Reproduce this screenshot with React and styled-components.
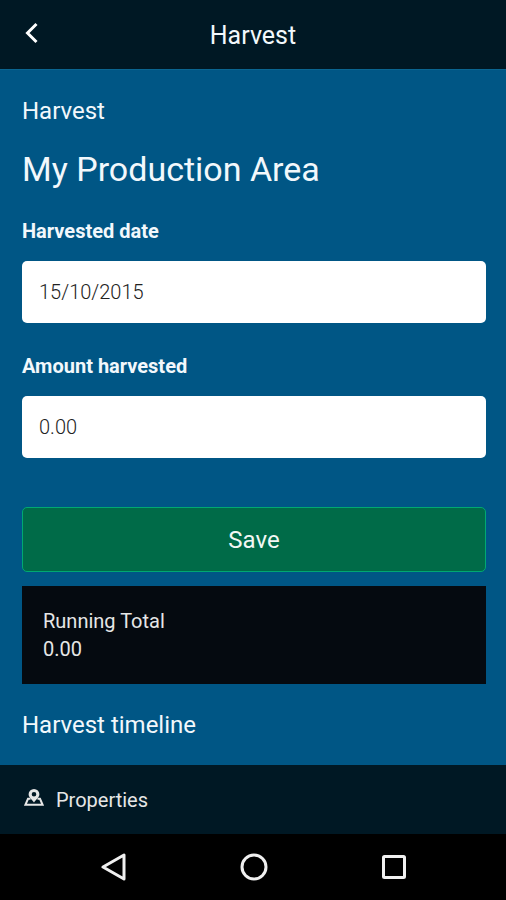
import React from "react";
import styled, { createGlobalStyle } from "styled-components";

export default function App() {
  const [date, setDate] = React.useState("15/10/2015");
  const [amount, setAmount] = React.useState("0.00");
  const [total, setTotal] = React.useState(0);

  function handleSubmit(e) {
    e.preventDefault();
    setTotal(total + (parseFloat(amount) || 0));
    setAmount("0.00");
  }

  return (
    <>
      <GlobalStyle />
      <Screen>
        <Header>
          <BackButton type="button" aria-label="Back">
            <svg width="14" height="22" viewBox="0 0 14 22">
              <path d="M12.5 2 L3.5 11 L12.5 20" />
            </svg>
          </BackButton>
          <HeaderTitle>Harvest</HeaderTitle>
        </Header>
        <Content>
          <SectionTitle>Harvest</SectionTitle>
          <AreaName>My Production Area</AreaName>
          <form onSubmit={handleSubmit}>
            <Label htmlFor="date">Harvested date</Label>
            <Input
              id="date"
              type="text"
              value={date}
              onChange={(e) => {
                setDate(e.target.value);
              }}
            />
            <Label htmlFor="amount">Amount harvested</Label>
            <Input
              id="amount"
              type="text"
              inputMode="decimal"
              value={amount}
              onChange={(e) => {
                setAmount(e.target.value);
              }}
            />
            <SaveButton type="submit">Save</SaveButton>
          </form>
          <TotalBox>
            <p>Running Total</p>
            <p>{total.toFixed(2)}</p>
          </TotalBox>
          <SectionTitle>Harvest timeline</SectionTitle>
        </Content>
        <Footer>
          <FooterLink href="#properties">
            <svg width="20" height="21" viewBox="0 0 20 21">
              <path d="M6.5 9.8 H4 L1.4 15.8 H18.6 L16 9.8 H13.5" />
              <path
                className="pin"
                d="M10 13.6 C8.2 10.8 4.6 8.4 4.6 5.3 A5.4 5.3 0 0 1 15.4 5.3 C15.4 8.4 11.8 10.8 10 13.6 Z M10 2.9 A2.3 2.3 0 1 0 10 7.5 A2.3 2.3 0 1 0 10 2.9 Z"
              />
            </svg>
            Properties
          </FooterLink>
        </Footer>
        <SystemBar>
          <SystemButton type="button" aria-label="System back">
            <svg width="28" height="28" viewBox="0 0 28 28">
              <path d="M24 2 V26 L3 14 Z" />
            </svg>
          </SystemButton>
          <SystemButton type="button" aria-label="Home">
            <svg width="28" height="28" viewBox="0 0 28 28">
              <circle cx="14" cy="14" r="12" />
            </svg>
          </SystemButton>
          <SystemButton type="button" aria-label="Recent apps">
            <svg width="28" height="28" viewBox="0 0 28 28">
              <rect x="3.5" y="3.5" width="21" height="21" rx="1" />
            </svg>
          </SystemButton>
        </SystemBar>
      </Screen>
    </>
  );
}

const GlobalStyle = createGlobalStyle`
  * {
    box-sizing: border-box;
  }
  body {
    margin: 0;
    background: #005685;
  }
  body, input, button {
    font-family: Roboto, "Liberation Sans", sans-serif;
  }
  h1, h2, p {
    margin: 0;
    font-weight: 400;
  }
`;

const Screen = styled.div`
  display: flex;
  flex-direction: column;
  min-height: 100vh;
  background: #005685;
  color: #f2f8fc;
`;

const Header = styled.header`
  display: grid;
  grid-template-columns: 64px 1fr 64px;
  align-items: center;
  height: 69px;
  padding-top: 2px;
  background: #001824;
`;

const BackButton = styled.button`
  display: flex;
  padding: 0 0 6px 24px;
  border: none;
  background: none;
  cursor: pointer;

  svg {
    fill: none;
    stroke: #ffffff;
    stroke-width: 3;
  }
`;

const HeaderTitle = styled.h1`
  font-size: 25px;
  line-height: 32px;
  text-align: center;
`;

const Content = styled.main`
  flex: 1;
  padding: 25px 20px 24px 22px;
  border-top: 1px solid #0a6591;
`;

const SectionTitle = styled.h2`
  font-size: 24px;
  line-height: 32px;
`;

const AreaName = styled.p`
  margin: 20px 0 26px;
  font-size: 34px;
  line-height: 44px;
`;

const Label = styled.label`
  display: block;
  margin-bottom: 16px;
  font-size: 20px;
  font-weight: 700;
  line-height: 28px;
`;

const Input = styled.input`
  display: block;
  width: 100%;
  height: 62px;
  margin-bottom: 29px;
  padding: 0 17px;
  border: none;
  border-radius: 5px;
  background: #ffffff;
  color: #222222;
  font-size: 20px;
  font-weight: 300;
`;

const SaveButton = styled.button`
  display: block;
  width: 100%;
  height: 65px;
  margin: 49px 0 14px;
  border: 1px solid #00a872;
  border-radius: 5px;
  background: #006b48;
  color: #f2f8f4;
  font-size: 24px;
  cursor: pointer;
`;

const TotalBox = styled.section`
  margin-bottom: 25px;
  padding: 21px;
  background: #050a10;
  color: #e6e6e6;
  font-size: 20px;
  line-height: 28px;
`;

const Footer = styled.footer`
  display: flex;
  align-items: center;
  height: 69px;
  padding: 0 24px;
  background: #001824;
`;

const FooterLink = styled.a`
  display: flex;
  align-items: center;
  gap: 12px;
  color: #e6e6e6;
  font-size: 20px;
  line-height: 28px;
  text-decoration: none;

  svg {
    fill: none;
    stroke: #e6e6e6;
    stroke-width: 2;
  }
  .pin {
    fill: #e6e6e6;
    fill-rule: evenodd;
    stroke: none;
  }
`;

const SystemBar = styled.nav`
  display: grid;
  grid-template-columns: repeat(3, 1fr);
  height: 66px;
  padding: 0 42px 0 44px;
  background: #000000;
`;

const SystemButton = styled.button`
  display: flex;
  align-items: center;
  justify-content: center;
  padding: 0;
  border: none;
  background: none;
  cursor: pointer;

  svg {
    fill: none;
    stroke: #f0f0f0;
    stroke-width: 3;
    stroke-linejoin: round;
  }
`;
